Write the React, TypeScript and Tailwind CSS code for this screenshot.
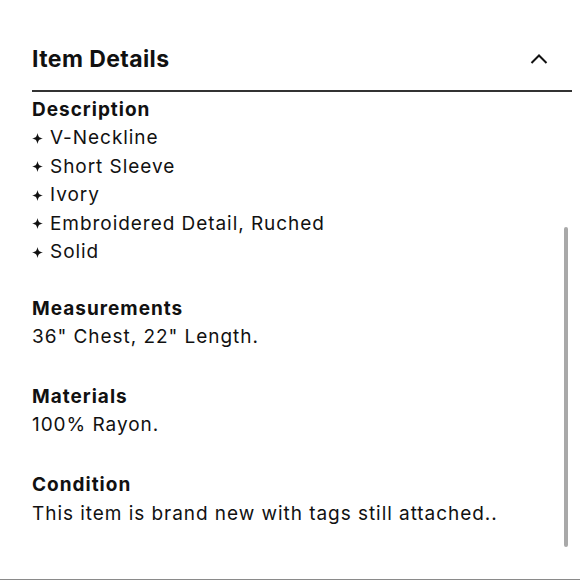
import React from "react";

const Star = () => (
  <svg width="11" height="11" viewBox="0 0 12 12" className="mr-[7px] shrink-0" aria-hidden>
    <path d="M6 0 C6.8 4.1 7.9 5.2 12 6 C7.9 6.8 6.8 7.9 6 12 C5.2 7.9 4.1 6.8 0 6 C4.1 5.2 5.2 4.1 6 0 Z" fill="#111" />
  </svg>
);

const Bullet = ({ children }: { children: React.ReactNode }) => (
  <div className="flex items-center">
    <Star />
    <span>{children}</span>
  </div>
);

export default function App() {
  return (
    <div
      className="relative h-[580px] w-[580px] overflow-hidden bg-white text-[#111] border-b border-[#8a8a8a]"
      style={{ fontFamily: "Inter, 'Liberation Sans', sans-serif" }}
    >
      <div className="ml-[32px] w-[540px]">
        <div className="flex items-center justify-between border-b-2 border-[#333] pt-[45px] pb-[17px]">
          <h2 className="text-[23px] leading-[28px] font-bold tracking-[0.4px]">Item Details</h2>
          <svg width="18" height="12" viewBox="0 0 18 12" className="mr-[24px]" aria-hidden>
            <path d="M1.5 10 L9 2.5 L16.5 10" fill="none" stroke="#111" strokeWidth="2" />
          </svg>
        </div>
        <div className="pt-[3.5px] text-[19px] leading-[28.5px] tracking-[0.95px]">
          <section>
            <h3 className="font-bold tracking-[1px]">Description</h3>
            <Bullet>V-Neckline</Bullet>
            <Bullet>Short Sleeve</Bullet>
            <Bullet>Ivory</Bullet>
            <Bullet>Embroidered Detail, Ruched</Bullet>
            <Bullet>Solid</Bullet>
          </section>
          <section className="mt-[28px]">
            <h3 className="font-bold tracking-[1px]">Measurements</h3>
            <p>36" Chest, 22" Length.</p>
          </section>
          <section className="mt-[31px]">
            <h3 className="font-bold tracking-[1px]">Materials</h3>
            <p>100% Rayon.</p>
          </section>
          <section className="mt-[31.5px]">
            <h3 className="font-bold tracking-[1px]">Condition</h3>
            <p>This item is brand new with tags still attached..</p>
          </section>
        </div>
      </div>
      <div className="absolute left-[564px] top-[227px] h-[320px] w-[4px] rounded-full bg-[#a9a9a9]" />
    </div>
  );
}
